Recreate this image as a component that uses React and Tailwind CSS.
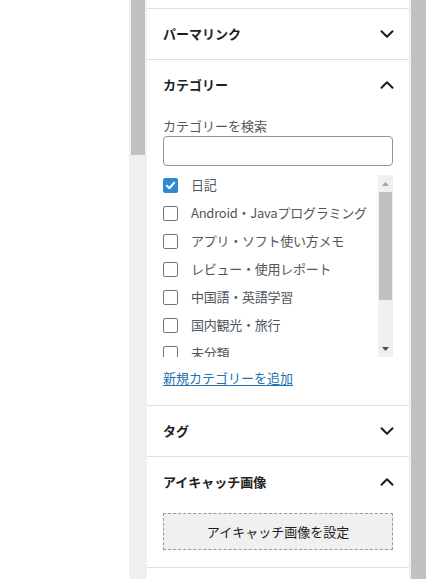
import { ChevronDown, ChevronUp } from 'lucide-react'

const font = { fontFamily: '"Noto Sans CJK JP", "Noto Sans", sans-serif' }

const cats = [
  { name: '日記', checked: true },
  { name: 'Android・Javaプログラミング' },
  { name: 'アプリ・ソフト使い方メモ' },
  { name: 'レビュー・使用レポート' },
  { name: '中国語・英語学習' },
  { name: '国内観光・旅行' },
  { name: '未分類' },
]

function Header({ title, open }) {
  return (
    <div className="h-[50px] px-4 flex items-center justify-between">
      <span className="text-[13px] font-bold text-[#1e1e1e]">{title}</span>
      {open ? (
        <ChevronUp size={22} strokeWidth={2.2} className="text-[#1e1e1e] -mr-[5px]" />
      ) : (
        <ChevronDown size={22} strokeWidth={2.2} className="text-[#1e1e1e] -mr-[5px]" />
      )}
    </div>
  )
}

function Checkbox({ checked }) {
  if (checked) {
    return (
      <div className="w-[15px] h-[15px] rounded-[2px] bg-[#2e8ad4] flex items-center justify-center shrink-0">
        <svg width="11" height="11" viewBox="0 0 12 12">
          <path d="M2 6.3 L4.8 9 L10 3" fill="none" stroke="white" strokeWidth="2.2" strokeLinecap="round" strokeLinejoin="round" />
        </svg>
      </div>
    )
  }
  return <div className="w-[15px] h-[15px] rounded-[2px] border-[1.5px] border-[#757575] bg-white shrink-0" />
}

export default function App() {
  return (
    <div className="flex w-[426px] h-[579px] bg-white overflow-hidden" style={font}>
      {/* left blank */}
      <div className="w-[129px] bg-white" />

      {/* outer scrollbar */}
      <div className="w-[18px] bg-[#f0f0f0] flex justify-center">
        <div className="w-[14px] h-[155px] bg-[#c1c1c1]" />
      </div>

      {/* sidebar panel */}
      <div className="w-[262px] bg-white flex flex-col">
        <div className="h-[9px] border-b border-[#e0e0e0] shrink-0" />

        <div className="border-b border-[#e0e0e0]">
          <Header title="パーマリンク" />
        </div>

        <div className="border-b border-[#e0e0e0]">
          <Header title="カテゴリー" open />
          <div className="px-4 pb-[17px]">
            <div className="mt-[7px] text-[13px] leading-[18px] text-[#50575e]">カテゴリーを検索</div>
            <div className="mt-[1px] h-[30px] rounded-[4px] border border-[#949494]" />
            <div className="mt-[9px] h-[182px] flex">
              <div className="flex-1 overflow-hidden flex flex-col gap-[8px]">
                {cats.map((c) => (
                  <div key={c.name} className="h-[20px] shrink-0 flex items-center gap-[13px]">
                    <Checkbox checked={c.checked} />
                    <span className="text-[13px] tracking-[-0.25px] text-[#50575e] whitespace-nowrap">{c.name}</span>
                  </div>
                ))}
              </div>
              <div className="w-[15px] bg-[#f0f0f0] flex flex-col items-center">
                <div className="h-[17px] flex items-center justify-center">
                  <svg width="7" height="4" viewBox="0 0 7 4"><path d="M3.5 0 L7 4 L0 4 Z" fill="#a3a3a3" /></svg>
                </div>
                <div className="w-[13px] h-[108px] bg-[#c1c1c1]" />
                <div className="flex-1" />
                <div className="h-[17px] flex items-center justify-center">
                  <svg width="7" height="4" viewBox="0 0 7 4"><path d="M0 0 L7 0 L3.5 4 Z" fill="#505050" /></svg>
                </div>
              </div>
            </div>
            <div className="mt-[11px] text-[13px] leading-[20px] text-[#2271b1] underline underline-offset-2">新規カテゴリーを追加</div>
          </div>
        </div>

        <div className="border-b border-[#e0e0e0]">
          <Header title="タグ" />
        </div>

        <div className="border-b border-[#e0e0e0]">
          <Header title="アイキャッチ画像" open />
          <div className="px-4 pb-[17px]">
            <div className="mt-[6px] h-[37px] border border-dashed border-[#9a9a9a] bg-[#f0f0f1] flex items-center justify-center text-[13px] text-[#1e1e1e]">
              アイキャッチ画像を設定
            </div>
          </div>
        </div>
      </div>

      {/* right scrollbar */}
      <div className="w-[2px] bg-[#f0f0f0]" />
      <div className="flex-1 bg-[#c1c1c1]" />
    </div>
  )
}
